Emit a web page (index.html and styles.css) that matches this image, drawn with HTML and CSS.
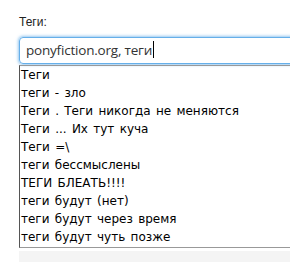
FILE: index.html
```html
<!DOCTYPE html>
<html lang="en">
<head>
    <meta charset="UTF-8">
    <title>Теги</title>
    <link rel="stylesheet" href="styles.css">
</head>
<body>
    <div class="field">
        <label class="field-label" for="tags">Теги:</label>
        <div class="tags-box">
            <div class="tags-input" id="tags">ponyfiction.org, теги<span class="caret"></span></div>
            <ul class="suggest">
                <li>Теги</li>
                <li>теги - зло</li>
                <li>Теги . Теги никогда не меняются</li>
                <li>Теги ... Их тут куча</li>
                <li>Теги =\</li>
                <li>теги бессмыслены</li>
                <li>ТЕГИ БЛЕАТЬ!!!!</li>
                <li>теги будут (нет)</li>
                <li>теги будут через время</li>
                <li>теги будут чуть позже</li>
            </ul>
            <div class="below"></div>
        </div>
    </div>
</body>
</html>
```

FILE: styles.css
```css
body { margin: 0; background: #fff; font-family: "DejaVu Sans", Verdana, sans-serif; overflow: hidden; }
.field { padding: 15px 0 0 19px; width: 300px; }
.field-label { display: block; font-family: "Liberation Sans", Arial, sans-serif; font-size: 12px; color: #222; margin-bottom: 8px; }
.tags-box { display: flex; flex-direction: column; }
.tags-input {
    height: 25px; border: 1px solid #66afe9; border-radius: 4px;
    box-shadow: 0 0 3px 1px rgba(102, 175, 233, 0.7);
    padding: 0 6px; font-family: "Open Sans", sans-serif; font-size: 13.5px; letter-spacing: -0.2px;
    line-height: 25px; color: #333;
}
.caret { display: inline-block; width: 1px; height: 17px; background: #000; vertical-align: -3px; margin-left: 1px; }
.suggest {
    list-style: none; margin: 1px 0 0 0; padding: 0 0 1px 1px;
    border-left: 1px solid #555; border-top: 1px solid #999; border-bottom: 1px solid #999;
    font-size: 12px; word-spacing: 1.5px; color: #000;
}
.suggest li { height: 18px; line-height: 18px; }
.below { height: 16px; margin-top: 3px; background: #f4f4f4; }
```
